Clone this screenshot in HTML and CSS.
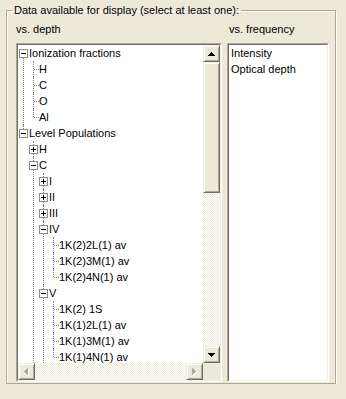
FILE: index.html
```html
<!DOCTYPE html>
<html lang="en">
<head>
  <meta charset="UTF-8">
  <meta name="viewport" content="width=device-width, initial-scale=1.0">
  <title>Data available for display</title>
  <link rel="stylesheet" href="styles.css">
</head>
<body>
  <fieldset class="group">
    <legend>Data available for display (select at least one):</legend>
    <div class="columns">

      <!-- vs. depth: tree with scrollbars -->
      <div class="col">
        <div class="caption">vs. depth</div>
        <div class="sunken tree-box">
          <div class="inner tree-grid">
            <div class="viewport">
              <ul class="tree">
                <li>
                  <div class="row"><span class="node"><i class="box"></i></span><span class="label">Ionization fractions</span></div>
                  <ul>
                    <li class="leaf"><div class="row"><span class="node"></span><span class="label">H</span></div></li>
                    <li class="leaf"><div class="row"><span class="node"></span><span class="label">C</span></div></li>
                    <li class="leaf"><div class="row"><span class="node"></span><span class="label">O</span></div></li>
                    <li class="leaf"><div class="row"><span class="node"></span><span class="label">Al</span></div></li>
                  </ul>
                </li>
                <li>
                  <div class="row"><span class="node"><i class="box"></i></span><span class="label">Level Populations</span></div>
                  <ul>
                    <li><div class="row"><span class="node"><i class="box plus"></i></span><span class="label">H</span></div></li>
                    <!-- "cont": more siblings follow below the visible area -->
                    <li class="cont">
                      <div class="row"><span class="node"><i class="box"></i></span><span class="label">C</span></div>
                      <ul>
                        <li><div class="row"><span class="node"><i class="box plus"></i></span><span class="label">I</span></div></li>
                        <li><div class="row"><span class="node"><i class="box plus"></i></span><span class="label">II</span></div></li>
                        <li><div class="row"><span class="node"><i class="box plus"></i></span><span class="label">III</span></div></li>
                        <li>
                          <div class="row"><span class="node"><i class="box"></i></span><span class="label">IV</span></div>
                          <ul>
                            <li class="leaf"><div class="row"><span class="node"></span><span class="label">1K(2)2L(1) av</span></div></li>
                            <li class="leaf"><div class="row"><span class="node"></span><span class="label">1K(2)3M(1) av</span></div></li>
                            <li class="leaf"><div class="row"><span class="node"></span><span class="label">1K(2)4N(1) av</span></div></li>
                          </ul>
                        </li>
                        <li class="cont">
                          <div class="row"><span class="node"><i class="box"></i></span><span class="label">V</span></div>
                          <ul>
                            <li class="leaf"><div class="row"><span class="node"></span><span class="label">1K(2) 1S</span></div></li>
                            <li class="leaf"><div class="row"><span class="node"></span><span class="label">1K(1)2L(1) av</span></div></li>
                            <li class="leaf"><div class="row"><span class="node"></span><span class="label">1K(1)3M(1) av</span></div></li>
                            <li class="leaf"><div class="row"><span class="node"></span><span class="label">1K(1)4N(1) av</span></div></li>
                          </ul>
                        </li>
                      </ul>
                    </li>
                  </ul>
                </li>
              </ul>
            </div>

            <div class="vscroll">
              <div class="btn">
                <svg width="7" height="4" viewBox="0 0 7 4"><path d="M3 0h1v1H3zM2 1h3v1H2zM1 2h5v1H1zM0 3h7v1H0z"/></svg>
              </div>
              <div class="thumb"></div>
              <div class="track"></div>
              <div class="btn">
                <svg width="7" height="4" viewBox="0 0 7 4"><path d="M0 0h7v1H0zM1 1h5v1H1zM2 2h3v1H2zM3 3h1v1H3z"/></svg>
              </div>
            </div>

            <div class="hscroll">
              <div class="btn off">
                <svg width="5" height="8" viewBox="0 0 5 8">
                  <path fill="#fff" d="M4 1h1v7H4zM3 2h1v5H3zM2 3h1v3H2zM1 4h1v1H1z"/>
                  <path fill="#aca899" d="M3 0h1v7H3zM2 1h1v5H2zM1 2h1v3H1zM0 3h1v1H0z"/>
                </svg>
              </div>
              <div class="track"></div>
              <div class="btn off">
                <svg width="5" height="8" viewBox="0 0 5 8">
                  <path fill="#fff" d="M1 1h1v7H1zM2 2h1v5H2zM3 3h1v3H3zM4 4h1v1H4z"/>
                  <path fill="#aca899" d="M0 0h1v7H0zM1 1h1v5H1zM2 2h1v3H2zM3 3h1v1H3z"/>
                </svg>
              </div>
            </div>

            <div class="corner"></div>
          </div>
        </div>
      </div>

      <!-- vs. frequency: plain list -->
      <div class="col col-right">
        <div class="caption">vs. frequency</div>
        <div class="sunken list-box">
          <div class="inner">
            <div class="item">Intensity</div>
            <div class="item">Optical depth</div>
          </div>
        </div>
      </div>

    </div>
  </fieldset>
</body>
</html>
```

FILE: styles.css
```css
body {
  margin: 0;
  background: #ece9d8;
  font-family: "Liberation Sans", Arial, sans-serif;
  font-size: 11px;
  color: #000;
}

/* group box with etched frame */
.group {
  box-sizing: border-box;
  width: 330px;
  min-width: 0;
  margin: 4px 0 0 6px;
  padding: 6px 6px 1px 5px;
  border: 1px solid #aca899;
  box-shadow: inset 1px 1px 0 #fff, 1px 1px 0 #fff;
}
.group legend {
  padding: 0 2px;
  line-height: 13px;
}

.columns {
  display: flex;
  gap: 5px;
  margin-left: 4px;
}
.col {
  width: 206px;
}
.col-right {
  width: 102px;
}
.caption {
  line-height: 13px;
  margin-bottom: 7px;
}
.col-right .caption {
  padding-left: 2px;
}

/* sunken 3d border */
.sunken {
  box-sizing: border-box;
  height: 339px;
  border: 1px solid;
  border-color: #aca899 #fff #fff #aca899;
  background: #fff;
}
.sunken .inner {
  box-sizing: border-box;
  height: 100%;
  border: 1px solid;
  border-color: #716f64 #f1efe2 #f1efe2 #716f64;
}

.tree-grid {
  display: grid;
  grid-template-columns: 1fr 17px;
  grid-template-rows: 1fr 17px;
}
.viewport {
  overflow: hidden;
  position: relative;
}

/* tree */
.tree, .tree ul {
  list-style: none;
  margin: 0;
  padding: 0;
}
.tree ul {
  padding-left: 10px;
}
.tree li {
  position: relative;
}
.tree li::before {
  content: "";
  position: absolute;
  left: 5px;
  top: 0;
  bottom: 0;
  border-left: 1px dotted #808080;
}
.tree li:last-child::before {
  bottom: auto;
  height: 8px;
}
.tree li.cont::before {
  bottom: 0;
  height: auto;
}
.tree > li:first-child::before {
  top: 8px;
}
.row {
  display: flex;
  height: 16px;
  line-height: 16px;
  white-space: nowrap;
}
.node {
  position: relative;
  flex: none;
  width: 11px;
}
.leaf > .row .node::after {
  content: "";
  position: absolute;
  left: 6px;
  top: 8px;
  width: 5px;
  border-top: 1px dotted #808080;
}
.box {
  position: relative;
  z-index: 1;
  display: block;
  box-sizing: border-box;
  width: 9px;
  height: 9px;
  margin: 4px 0 0 1px;
  border: 1px solid #8c8c8c;
  background: linear-gradient(#000, #000) center / 5px 1px no-repeat, #fff;
}
.box.plus {
  background:
    linear-gradient(#000, #000) center / 5px 1px no-repeat,
    linear-gradient(#000, #000) center / 1px 5px no-repeat,
    #fff;
}

/* scrollbars */
.vscroll {
  display: flex;
  flex-direction: column;
}
.hscroll {
  display: flex;
}
.btn, .thumb {
  box-sizing: border-box;
  background: #ece9d8;
  border: 1px solid;
  border-color: #f1efe2 #716f64 #716f64 #f1efe2;
  box-shadow: inset 1px 1px 0 #fff, inset -1px -1px 0 #aca899;
}
.btn {
  display: flex;
  align-items: center;
  justify-content: center;
  width: 17px;
  height: 17px;
  flex: none;
}
.btn svg {
  display: block;
}
.thumb {
  height: 131px;
  flex: none;
}
.track {
  flex: 1;
  background: repeating-conic-gradient(#fff 0 25%, #ece9d8 0 50%) 0 0 / 2px 2px;
}
.corner {
  background: #ece9d8;
}

/* list box */
.item {
  line-height: 16px;
  padding-left: 2px;
  white-space: nowrap;
}
```
